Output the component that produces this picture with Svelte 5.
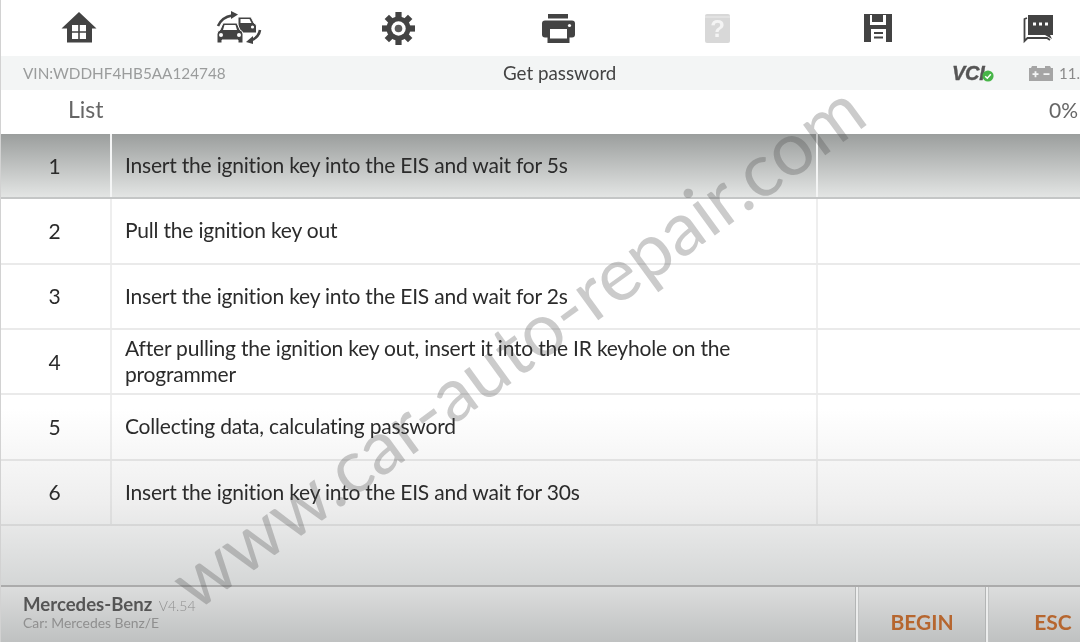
<script>
  const rows = [
    { n: 1, text: 'Insert the ignition key into the EIS and wait for 5s', active: true },
    { n: 2, text: 'Pull the ignition key out' },
    { n: 3, text: 'Insert the ignition key into the EIS and wait for 2s' },
    { n: 4, text: 'After pulling the ignition key out, insert it into the IR keyhole on the programmer' },
    { n: 5, text: 'Collecting data, calculating password' },
    { n: 6, text: 'Insert the ignition key into the EIS and wait for 30s' }
  ];
  const teeth = [0, 45, 90, 135, 180, 225, 270, 315];
</script>

<div class="app">
  <header class="toolbar">
    <svg viewBox="-27 0 54 36" aria-label="Home">
      <path class="ink" d="M1 2 L18.5 18.5 H14 V32.5 H-11 V18.5 H-16.5 Z" />
      <rect class="paper" x="-6" y="15" width="14" height="14" />
      <path class="ink" d="M-6.2 21.2 H8 V22.8 H-6.2 Z M0.2 15 H1.8 V29 H0.2 Z" />
    </svg>
    <svg viewBox="-27 0 54 36" aria-label="Change car">
      <path class="line" d="M-20 16 Q-16 7 -6 5.5" />
      <path class="ink" d="M-7 1 L0 4.5 L-7 9 Z" />
      <path class="ink halo" d="M0 7 H13 L16 13 Q18.5 14 18.5 16 V23 H0 Z" />
      <path class="paper" d="M2.5 9 H11.5 L13.5 13 H2.5 Z" />
      <circle class="paper" cx="14.5" cy="17" r="1.6" />
      <path class="ink halo" d="M-15 13 H-1 L2 20 Q5 21 5 24 V33 H0 V30 H-16 V33 H-21 V24 Q-21 21 -18 20 Z" />
      <path class="paper" d="M-13.5 15 H-2.5 L-1 20 H-15 Z" />
      <circle class="paper" cx="-17" cy="25" r="2" />
      <circle class="paper" cx="1" cy="25" r="2" />
      <path class="line" d="M22 20 Q21 27 13 30.5" />
      <path class="ink" d="M15 26 L15 34 L8 32 Z" />
    </svg>
    <svg viewBox="-27 0 54 36" aria-label="Settings">
      {#each teeth as a}
        <rect class="ink" x="-2.6" y="2" width="6.2" height="8" transform="rotate({a} 0.5 18.5)" />
      {/each}
      <circle class="ink" cx="0.5" cy="18.5" r="12" />
      <circle class="paper" cx="0.5" cy="18.5" r="7.2" />
      <circle class="ink soft" cx="0.5" cy="18.5" r="3.8" />
    </svg>
    <svg viewBox="-27 0 54 36" aria-label="Print">
      <rect class="ink" x="-10" y="4" width="20" height="4.5" />
      <rect class="ink" x="-16" y="10.5" width="33" height="17" rx="3" />
      <rect class="ink" x="-10.5" y="18" width="22" height="15" />
      <rect class="paper" x="-8" y="19" width="17" height="9.5" />
      <circle class="paper" cx="11.5" cy="15.5" r="1.6" />
    </svg>
    <svg viewBox="-27 0 54 36" aria-label="Help">
      <rect class="muted" x="-13" y="4" width="25" height="29" rx="2" />
      <rect class="paper-soft" x="-13" y="6.5" width="25" height="1" />
      <text class="mark" x="-0.5" y="27">?</text>
    </svg>
    <svg viewBox="-27 0 54 36" aria-label="Save">
      <path class="ink" d="M-14 4 H14 V32 H-14 Z" />
      <rect class="paper" x="-8" y="5" width="16" height="10" />
      <rect class="ink" x="-6" y="5" width="11" height="7" />
      <rect class="paper" x="-7" y="19" width="15" height="13" />
      <rect class="ink" x="-4" y="22" width="9" height="2" />
      <rect class="ink" x="-4" y="26.5" width="9" height="2" />
    </svg>
    <svg viewBox="-27 0 54 36" aria-label="Messages">
      <path class="outline" d="M-11 8 L-13.5 9 V31 L-10.5 28 H9 L12 30" />
      <path class="ink" d="M-10 5 H15 V25 H12 L14 29 L7 25 H-10 Z" />
      <rect class="paper" x="-5" y="12.5" width="3" height="3" />
      <rect class="paper" x="1" y="12.5" width="3" height="3" />
      <rect class="paper" x="7" y="12.5" width="3" height="3" />
    </svg>
  </header>

  <div class="status">
    <span class="vin">VIN:WDDHF4HB5AA124748</span>
    <span class="title">Get password</span>
    <span class="vci">
      <span class="vci-text">VCI</span>
      <svg class="vci-ok" viewBox="0 0 12 12" aria-hidden="true">
        <circle cx="6" cy="6" r="5.6" fill="#47b548" />
        <path d="M3.2 6.2 L5.3 8.2 L8.8 4.2" fill="none" stroke="#fff" stroke-width="1.5" />
      </svg>
    </span>
    <svg class="battery" viewBox="0 0 24 15" aria-hidden="true">
      <path d="M2 2 H8 V0 H3 Z M16 2 H22 L21 0 H16 Z" fill="#a5a5a5" />
      <rect y="2" width="24" height="13" fill="#a5a5a5" />
      <path d="M3.5 8.2 H9.5 M6.5 5.2 V11.2 M14.5 8.2 H20.5" stroke="#f3f5f5" stroke-width="1.8" />
    </svg>
    <span class="volt">11.7</span>
  </div>

  <div class="list-head">
    <span class="list-label">List</span>
    <span class="percent">0%</span>
  </div>

  <main class="content">
    <div class="table">
      {#each rows as r}
        <div class="row" class:active={r.active}>
          <div class="num">{r.n}</div>
          <div class="text">{r.text}</div>
          <div class="extra"></div>
        </div>
      {/each}
    </div>
  </main>

  <footer class="footer">
    <div class="info">
      <div class="brand">Mercedes-Benz <small>V4.54</small></div>
      <div class="car">Car: Mercedes Benz/E</div>
    </div>
    <button class="action">BEGIN</button>
    <button class="action esc">ESC</button>
  </footer>

  <div class="watermark">www.car-auto-repair.com</div>
</div>

<style>
  :global(body) {
    margin: 0;
    background: #fff;
  }
  .app {
    position: relative;
    box-sizing: border-box;
    width: 1080px;
    height: 642px;
    overflow: hidden;
    display: flex;
    flex-direction: column;
    border-left: 1px solid #d2d2d2;
    font-family: Lato, "Open Sans", sans-serif;
    font-variant-ligatures: none;
    background: #fff;
    color: #333;
    filter: blur(0.35px);
  }
  .toolbar {
    flex: none;
    height: 56px;
    display: flex;
    align-items: center;
    gap: 106px;
    padding-left: 50px;
  }
  .toolbar svg {
    flex: none;
    width: 54px;
    height: 36px;
  }
  .ink {
    fill: #434343;
  }
  .soft {
    fill: #5c5c5c;
  }
  .paper {
    fill: #fff;
  }
  .paper-soft {
    fill: #ececec;
  }
  .halo {
    stroke: #fff;
    stroke-width: 1;
  }
  .line {
    fill: none;
    stroke: #434343;
    stroke-width: 2.6;
  }
  .outline {
    fill: none;
    stroke: #434343;
    stroke-width: 1.8;
  }
  .muted {
    fill: #d8d8d8;
  }
  .mark {
    fill: #f4f4f4;
    font-family: "Liberation Sans", sans-serif;
    font-size: 24px;
    font-weight: 700;
    text-anchor: middle;
  }
  .status {
    flex: none;
    height: 34px;
    display: flex;
    align-items: center;
    background: #f3f5f5;
    white-space: nowrap;
  }
  .vin {
    flex: none;
    width: 480px;
    padding-left: 22px;
    box-sizing: border-box;
    font-size: 15.3px;
    color: #9a9c9c;
    margin-top: -1px;
  }
  .title {
    flex: none;
    width: 113px;
    margin-left: 22px;
    font-size: 18.8px;
    color: #444;
    margin-top: -2px;
  }
  .vci {
    flex: none;
    margin-left: 336px;
    display: flex;
    align-items: center;
    width: 77px;
    position: relative;
  }
  .vci-text {
    font-family: "Liberation Sans", sans-serif;
    font-style: italic;
    font-weight: 700;
    font-size: 20px;
    letter-spacing: -0.3px;
    color: #555;
    -webkit-text-stroke: 0.4px #555;
  }
  .vci-ok {
    position: absolute;
    left: 30px;
    top: 8px;
    width: 12px;
    height: 12px;
  }
  .battery {
    flex: none;
    width: 24px;
    height: 15px;
  }
  .volt {
    flex: none;
    margin-left: 6px;
    font-size: 15px;
    color: #8a8a8a;
  }
  .list-head {
    flex: none;
    height: 44px;
    display: flex;
    align-items: center;
    justify-content: space-between;
    padding: 0 2px 6px 67px;
    box-sizing: border-box;
    color: #666;
  }
  .list-label {
    font-size: 23px;
  }
  .percent {
    font-size: 21px;
  }
  .content {
    flex: 1;
    background: linear-gradient(#fff 0, #fff 275px, #eeeeee 370px, #d4d6d6 452px);
  }
  .table {
    display: flex;
    flex-direction: column;
  }
  .row {
    height: 65.33px;
    box-sizing: border-box;
    display: grid;
    grid-template-columns: 109px 708px 1fr;
    border-bottom: 2px solid rgba(150, 150, 150, 0.2);
    font-size: 21px;
    letter-spacing: -0.2px;
    color: #2b2b2b;
  }
  .row.active {
    background: linear-gradient(#9b9e9d, #e3e5e4);
    border-bottom-color: #c4c6c6;
  }
  .num {
    display: flex;
    align-items: center;
    justify-content: center;
    padding-right: 2px;
    padding-bottom: 1px;
  }
  .text {
    display: flex;
    align-items: center;
    padding: 0 70px 1px 13px;
    line-height: 26px;
    border-left: 2px solid rgba(170, 170, 170, 0.2);
    border-right: 2px solid rgba(170, 170, 170, 0.2);
  }
  .active .text {
    border-color: #f4f5f5;
  }
  .footer {
    flex: none;
    height: 57px;
    display: flex;
    border-top: 2px solid #ababab;
    box-sizing: border-box;
    background: linear-gradient(#dcdddd, #bfc1c1);
  }
  .info {
    flex: none;
    width: 855px;
    padding: 5px 0 0 22px;
    box-sizing: border-box;
  }
  .brand {
    font-size: 18.6px;
    font-weight: 700;
    color: #555;
    line-height: 24px;
  }
  .brand small {
    font-size: 14px;
    font-weight: 300;
    color: #8f8f8f;
    margin-left: 2px;
  }
  .car {
    font-size: 13.9px;
    color: #8f8f8f;
    line-height: 14px;
    margin-top: -2px;
  }
  .action {
    flex: none;
    width: 130px;
    border: 0;
    border-left: 2px solid #eceded;
    box-shadow: inset 1px 0 0 #c2c4c4, -1px 0 0 #b3b5b5;
    background: none;
    padding: 13px 0 0;
    font-family: Lato, sans-serif;
    font-size: 21px;
    font-weight: 700;
    color: #b6662f;
  }
  .esc {
    width: 132px;
  }
  .watermark {
    position: absolute;
    left: 515px;
    top: 299px;
    width: 0;
    display: flex;
    justify-content: center;
    white-space: nowrap;
    font-size: 74.5px;
    font-weight: 400;
    color: rgba(70, 70, 70, 0.28);
    transform: rotate(-36deg);
    pointer-events: none;
  }
</style>
